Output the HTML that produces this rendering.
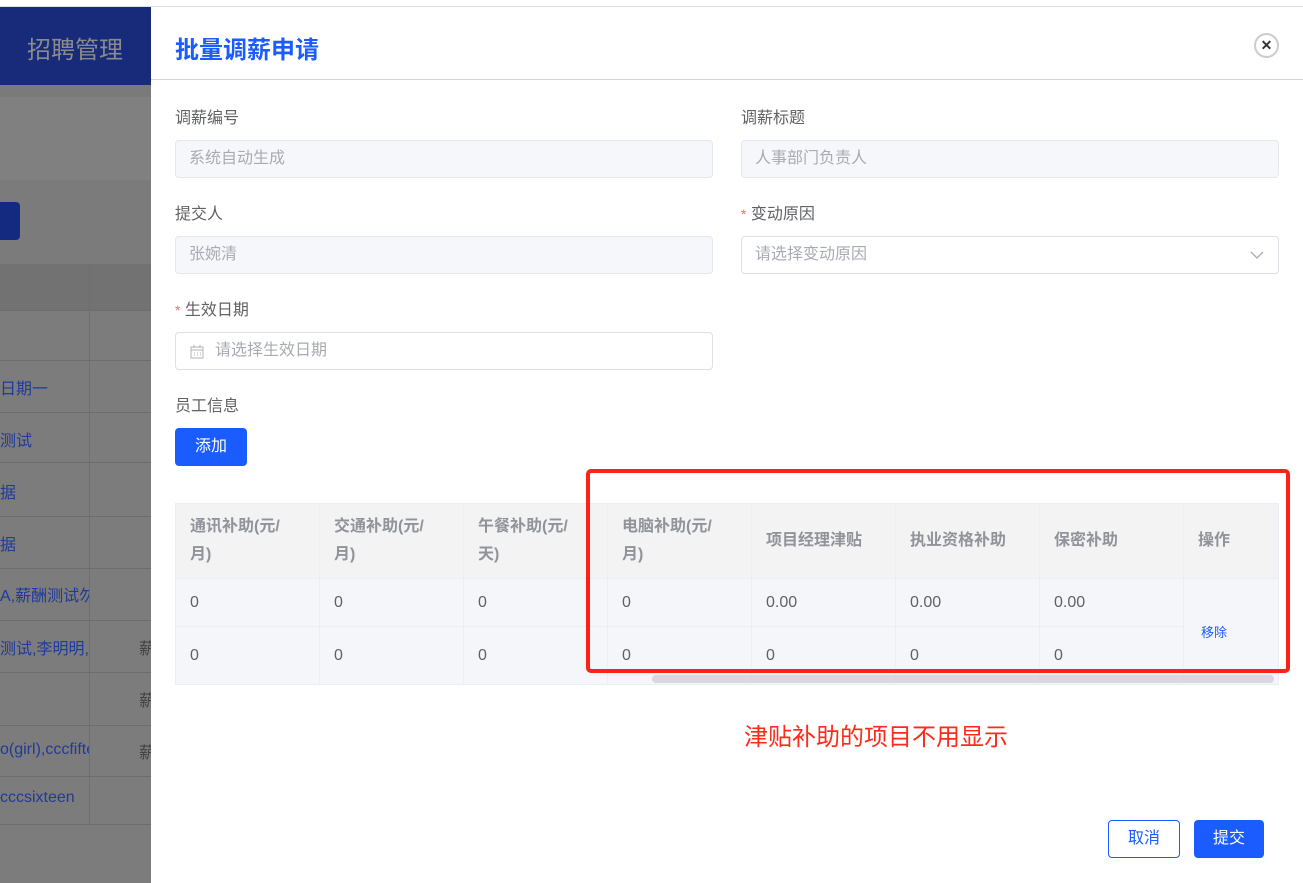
<!DOCTYPE html>
<html><head><meta charset="utf-8"><style>
*{margin:0;padding:0;box-sizing:border-box}
body{width:1303px;height:883px;overflow:hidden;background:#fff;position:relative;font-family:"Liberation Sans","Noto Sans CJK SC",sans-serif;color:#606266}
.a{position:absolute}
.lbl{font-size:16px;color:#606266}
.inp{height:38px;border:1px solid #e4e7ed;border-radius:4px;background:#f5f7fa;font-size:16px;color:#a8abb2;padding:8px 13px;line-height:20px}
.inp.w{background:#fff;border-color:#dcdfe6}
.req{color:#f56c6c;font-size:14px}
.row{position:absolute;left:0;width:151px;border-top:1px solid #6d6d6d}
.lt{font-size:16px;color:#1f3a9a}
table{border-collapse:collapse;position:absolute;left:175px;top:503px;width:1103px;table-layout:fixed}
td,th{border:1px solid #ebeef5;text-align:left;padding:0 14px;font-size:16px}
th{background:#f3f3f4;color:#909399;font-weight:bold;height:75px;line-height:28px}
td{background:#f5f6f9;color:#606266}
</style></head><body>
<div class="a" style="left:0;top:0;width:1303px;height:7px;background:#fff;border-bottom:1px solid #dcdfe6"></div>
<div class="a" style="left:0;top:7px;width:151px;height:876px;background:#7c7c7c"></div>
<div class="a" style="left:0;top:7px;width:151px;height:78px;background:#172b7a"></div>
<div class="a" style="left:27px;top:30px;font-size:24px;color:#8a8a8a">招聘管理</div>
<div class="a" style="left:0;top:85px;width:151px;height:12px;background:#7a7a7a"></div>
<div class="a" style="left:0;top:97px;width:151px;height:83px;background:#808080"></div>
<div class="a" style="left:0;top:180px;width:151px;height:84px;background:#7b7b7b"></div>
<div class="a" style="left:0;top:202px;width:20px;height:38px;background:#142a80;border-radius:0 4px 4px 0"></div>
<div class="a" style="left:0;top:264px;width:151px;height:46px;background:#727272"></div>
<div class="a" style="left:89px;top:264px;width:1px;height:560px;background:#6e6e6e"></div>
<div class="row" style="top:310px"></div><div class="row" style="top:360px"></div><div class="row" style="top:412px"></div><div class="row" style="top:462px"></div><div class="row" style="top:516px"></div><div class="row" style="top:568px"></div><div class="row" style="top:620px"></div><div class="row" style="top:672px"></div><div class="row" style="top:725px"></div><div class="row" style="top:776px"></div><div class="row" style="top:824px"></div>
<div class="a lt" style="left:0;top:375px">日期一</div>
<div class="a lt" style="left:0;top:427px">测试</div>
<div class="a lt" style="left:0;top:479px">据</div>
<div class="a lt" style="left:0;top:531px">据</div>
<div class="a lt" style="left:0;top:582px;width:89px;overflow:hidden;white-space:nowrap">A,薪酬测试勿</div>
<div class="a lt" style="left:0;top:635px;width:89px;overflow:hidden;white-space:nowrap">测试,李明明,</div>
<div class="a lt" style="left:0;top:741px;width:89px;overflow:hidden;white-space:nowrap">o(girl),cccfifteen</div>
<div class="a lt" style="left:0;top:789px">cccsixteen</div>
<div class="a" style="left:139px;top:635px;font-size:16px;color:#444">薪</div>
<div class="a" style="left:139px;top:687px;font-size:16px;color:#444">薪</div>
<div class="a" style="left:139px;top:739px;font-size:16px;color:#444">薪</div>
<div class="a" style="left:151px;top:7px;width:1152px;height:876px;background:#fff"></div>
<div class="a" style="left:151px;top:79px;width:1152px;height:1px;background:#d4d4d4"></div>
<div class="a" style="left:175px;top:30px;font-size:24px;font-weight:bold;color:#1a5cff">批量调薪申请</div>
<div class="a" style="left:1254px;top:33px;width:25px;height:25px;border:2px solid #ccc;border-radius:50%;text-align:center;line-height:20px;font-size:14px;font-weight:bold;color:#333">✕</div>

<div class="a lbl" style="left:175px;top:104px">调薪编号</div>
<div class="a inp" style="left:175px;top:140px;width:538px">系统自动生成</div>
<div class="a lbl" style="left:741px;top:104px">调薪标题</div>
<div class="a inp" style="left:741px;top:140px;width:538px">人事部门负责人</div>
<div class="a lbl" style="left:175px;top:200px">提交人</div>
<div class="a inp" style="left:175px;top:236px;width:538px">张婉清</div>
<div class="a lbl" style="left:741px;top:200px"><span class="req">*</span> 变动原因</div>
<div class="a inp w" style="left:741px;top:236px;width:538px">请选择变动原因
<svg class="a" style="right:14px;top:13px" width="14" height="10" viewBox="0 0 14 10"><path d="M1 2l6 6 6-6" fill="none" stroke="#a8abb2" stroke-width="1.3"/></svg></div>
<div class="a lbl" style="left:175px;top:296px"><span class="req">*</span> 生效日期</div>
<div class="a inp w" style="left:175px;top:332px;width:538px;padding-left:39px">请选择生效日期
<svg class="a" style="left:14px;top:12px" width="14" height="14" viewBox="0 0 14 14"><rect x="1" y="2" width="12" height="11" fill="none" stroke="#b0b3b8"/><path d="M1 5h12M4 0v3M10 0v3M4 8h1M7 8h1M10 8h1M4 10h1M7 10h1M10 10h1" stroke="#b0b3b8"/></svg></div>
<div class="a lbl" style="left:175px;top:392px">员工信息</div>
<div class="a" style="left:175px;top:428px;width:72px;height:38px;background:#1a5cff;border-radius:4px;color:#fff;font-size:16px;text-align:center;line-height:38px">添加</div>

<table>
<colgroup><col width="144"><col width="144"><col width="144"><col width="144"><col width="144"><col width="144"><col width="144"><col width="95"></colgroup>
<tr><th>通讯补助(元/<br>月)</th><th>交通补助(元/<br>月)</th><th>午餐补助(元/<br>天)</th><th>电脑补助(元/<br>月)</th><th>项目经理津贴</th><th>执业资格补助</th><th>保密补助</th><th>操作</th></tr>
<tr style="height:48px"><td>0</td><td>0</td><td>0</td><td>0</td><td>0.00</td><td>0.00</td><td>0.00</td><td rowspan="2" style="color:#1a5cff;font-size:13px;padding-left:17px">移除</td></tr>
<tr style="height:58px"><td>0</td><td>0</td><td>0</td><td>0</td><td>0</td><td>0</td><td>0</td></tr>
</table>
<div class="a" style="left:652px;top:675px;width:622px;height:8px;background:#d8d9dc;border-radius:4px"></div>

<div class="a" style="left:586px;top:469px;width:704px;height:204px;border:4px solid #ff2018;border-radius:5px"></div>
<div class="a" style="left:744px;top:717px;font-size:24px;color:#ff2a1a">津贴补助的项目不用显示</div>

<div class="a" style="left:1108px;top:820px;width:72px;height:38px;border:1px solid #1a5cff;border-radius:4px;color:#1a5cff;font-size:16px;text-align:center;line-height:36px">取消</div>
<div class="a" style="left:1194px;top:820px;width:70px;height:38px;background:#1a5cff;border-radius:4px;color:#fff;font-size:16px;text-align:center;line-height:38px">提交</div>
</body></html>
